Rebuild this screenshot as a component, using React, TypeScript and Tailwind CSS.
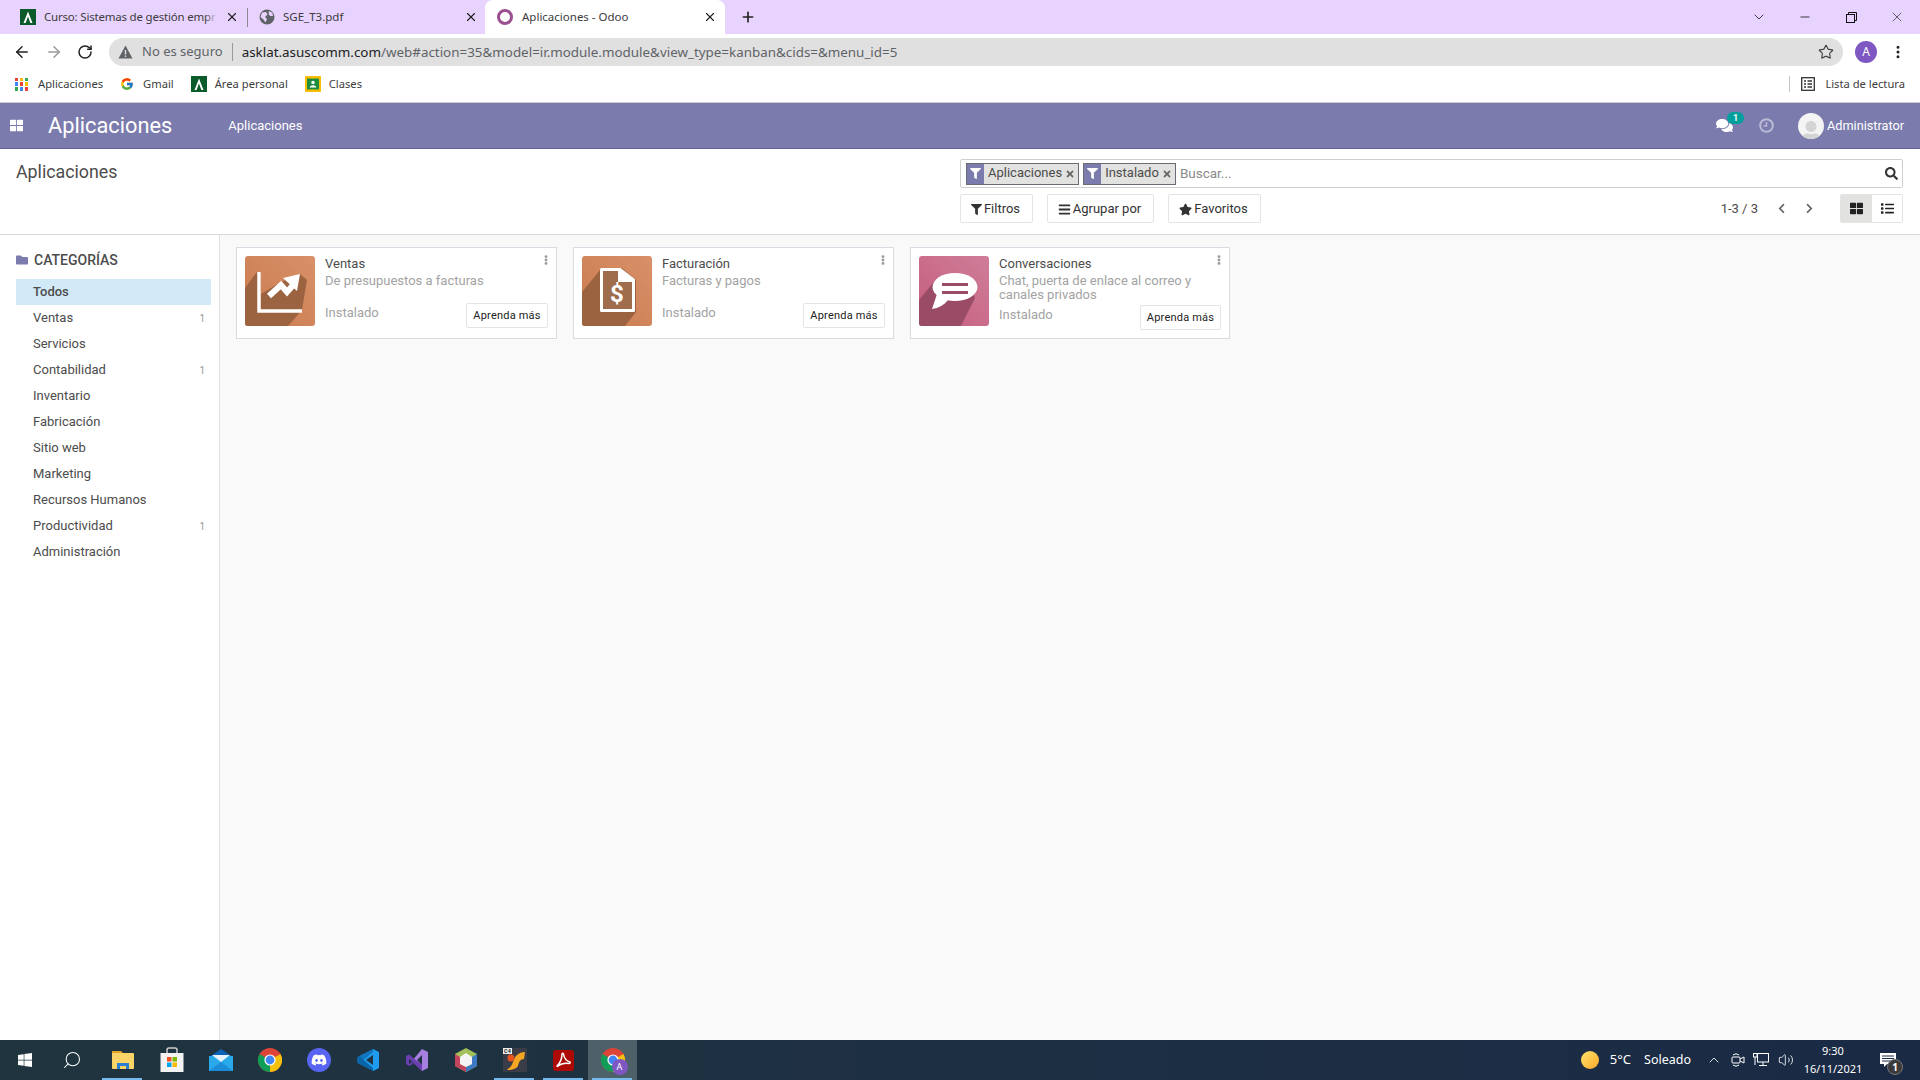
import React from 'react'
import { ArrowLeft, ArrowRight, RotateCw, X, Plus, ChevronDown, Minus, Star, ChevronUp, Volume2, EllipsisVertical, Search } from 'lucide-react'
import { FaFilter, FaBars, FaStar, FaThLarge, FaList, FaTimes, FaFolder, FaComments, FaChevronLeft, FaChevronRight, FaEllipsisV, FaSearch, FaWindows, FaDiscord, FaUser } from 'react-icons/fa'
import { FcGoogle } from 'react-icons/fc'

function AulaLogo({ size = 16 }: { size?: number }) {
  return (
    <svg width={size} height={size} viewBox="0 0 16 16" className="shrink-0">
      <rect width="16" height="16" fill="#0b5a2a" />
      <path d="M8 2.5 L12.5 14 H10.4 L8 7.5 L5.6 14 H3.5 Z" fill="#fff" />
    </svg>
  )
}

function ChromeIcon({ size = 24 }: { size?: number }) {
  return (
    <svg width={size} height={size} viewBox="0 0 24 24" className="shrink-0">
      <circle cx="12" cy="12" r="12" fill="#db4437" />
      <path d="M12 12 L1.6 6 A12 12 0 0 0 12 24 Z" fill="#0f9d58" />
      <path d="M12 12 L12 24 A12 12 0 0 0 22.4 6 Z" fill="#f4c20d" />
      <circle cx="12" cy="12" r="5.6" fill="#fff" />
      <circle cx="12" cy="12" r="4.4" fill="#4285f4" />
    </svg>
  )
}

function AppsGrid() {
  const colors = ['#ea4335', '#fbbc05', '#34a853', '#4285f4', '#ea4335', '#fbbc05', '#34a853', '#4285f4', '#ea4335']
  return (
    <div className="grid grid-cols-3 gap-[1.5px] w-[13px] h-[13px] shrink-0">
      {colors.map((c, i) => (
        <span key={i} style={{ backgroundColor: c }} />
      ))}
    </div>
  )
}

function Tabs() {
  return (
    <div className="h-[34px] bg-[#e8d3ff] flex pl-2 text-[11.5px] text-[#3c3c3c] shrink-0" style={{ fontFamily: '"Noto Sans", sans-serif' }}>
      <div className="w-[240px] flex items-center pl-3 pr-[9px] gap-2 relative">
        <AulaLogo />
        <span className="relative flex-1 min-w-0 whitespace-nowrap tracking-[-0.2px]">
          Curso: Sistemas de gestión empr
          <span className="absolute right-0 top-0 bottom-0 w-[12px] bg-gradient-to-r from-transparent to-[#e8d3ff]" />
        </span>
        <X size={14} strokeWidth={2} color="#222" className="shrink-0" />
        <span className="absolute right-0 top-[8px] h-[19px] w-px bg-[#8d8796]" />
      </div>
      <div className="w-[237px] flex items-center pl-[11px] pr-[7px] gap-2">
        <svg width="16" height="16" viewBox="0 0 16 16" className="shrink-0">
          <circle cx="8" cy="8" r="7.5" fill="#5f6368" />
          <path d="M3 3.5 L7 3 L8.5 5.5 L6 8 L8 10 L6.5 13.5 L4.5 10.5 L1.5 8 Z M10 2 L13.5 4 L14 7 L11 7 L9.5 4.5 Z" fill="#e8d3ff" />
        </svg>
        <span className="flex-1 whitespace-nowrap">SGE_T3.pdf</span>
        <X size={14} strokeWidth={2} color="#222" className="shrink-0" />
      </div>
      <div className="w-[240px] flex items-center pl-3 pr-2 gap-[9px] bg-white rounded-t-[8px]">
        <span className="w-[16px] h-[16px] rounded-full border-[3px] border-[#9b4f8f] shrink-0" />
        <span className="flex-1 whitespace-nowrap">Aplicaciones - Odoo</span>
        <X size={14} strokeWidth={2} color="#222" className="shrink-0" />
      </div>
      <div className="flex items-center ml-[15px]">
        <Plus size={16} strokeWidth={2.5} color="#222" />
      </div>
      <div className="ml-auto flex text-[#222]">
        <div className="w-[46px] flex items-center justify-center"><ChevronDown size={16} strokeWidth={1.25} /></div>
        <div className="w-[46px] flex items-center justify-center"><Minus size={14} strokeWidth={1.5} /></div>
        <div className="w-[46px] flex items-center justify-center">
          <svg width="11" height="11" viewBox="0 0 11 11" fill="none" stroke="#111" strokeWidth="1">
            <rect x="0.5" y="2.5" width="8" height="8" />
            <path d="M2.5 2.5 V0.5 H10.5 V8.5 H8.5" />
          </svg>
        </div>
        <div className="w-[46px] flex items-center justify-center"><X size={16} strokeWidth={1} /></div>
      </div>
    </div>
  )
}

function Toolbar() {
  return (
    <div className="h-[35px] bg-white flex items-center shrink-0" style={{ fontFamily: '"Noto Sans", sans-serif' }}>
      <div className="w-[109px] flex items-center pl-[13px] gap-[14px]">
        <ArrowLeft size={18} strokeWidth={2} color="#222" />
        <ArrowRight size={18} strokeWidth={2} color="#9a9a9a" />
        <RotateCw size={16} strokeWidth={2.25} color="#222" />
      </div>
      <div className="w-[1734px] h-[28px] rounded-full bg-[#e0e0e0] flex items-center pl-[9px] text-[13px]">
        <svg width="15" height="14" viewBox="0 0 15 14" className="shrink-0">
          <path d="M7.5 0.5 L14.5 13.5 H0.5 Z" fill="#5f6368" />
          <rect x="6.8" y="5" width="1.4" height="4.5" fill="#e0e0e0" />
          <rect x="6.8" y="10.5" width="1.4" height="1.4" fill="#e0e0e0" />
        </svg>
        <span className="ml-[9px] pt-[1px] text-[#5f6368] whitespace-nowrap">No es seguro</span>
        <span className="ml-[9px] w-px h-[18px] bg-[#9a9a9a]" />
        <span className="ml-[9px] pt-[1px] text-[13.4px] text-[#202124] whitespace-nowrap">asklat.asuscomm.com<span className="text-[#5f6368]">/web#action=35&amp;model=ir.module.module&amp;view_type=kanban&amp;cids=&amp;menu_id=5</span></span>
        <Star size={16} strokeWidth={1.75} color="#444" className="ml-auto mr-[9px]" />
      </div>
      <span className="ml-[12px] w-[22px] h-[22px] rounded-full bg-[#7e57c2] text-white text-[12px] flex items-center justify-center">A</span>
      <EllipsisVertical size={16} strokeWidth={2.5} color="#222" className="ml-[13px]" />
    </div>
  )
}

function Bookmarks() {
  return (
    <div className="h-[34px] bg-white border-b border-[#cdcdcd] flex items-center pl-[15px] pr-[15px] pb-[3px] text-[11.2px] text-[#3c3c3c] shrink-0" style={{ fontFamily: '"Noto Sans", sans-serif' }}>
      <AppsGrid />
      <span className="ml-[10px]">Aplicaciones</span>
      <FcGoogle size={14} className="ml-[17px]" />
      <span className="ml-[9px]">Gmail</span>
      <span className="ml-[17px]"><AulaLogo /></span>
      <span className="ml-[8px]">Área personal</span>
      <svg width="16" height="16" viewBox="0 0 16 16" className="ml-[17px] shrink-0">
        <rect width="16" height="16" rx="1" fill="#fbbc05" />
        <rect x="2" y="2.5" width="12" height="11" fill="#1e8e3e" />
        <circle cx="8" cy="6.5" r="1.7" fill="#fff" />
        <path d="M4.8 11.5 C5 8.6 11 8.6 11.2 11.5 Z" fill="#fff" />
      </svg>
      <span className="ml-[8px]">Clases</span>
      <span className="ml-auto w-px h-[16px] bg-[#c4c4c4]" />
      <svg width="14" height="14" viewBox="0 0 14 14" fill="none" stroke="#333" strokeWidth="1.3" className="ml-[11px]">
        <rect x="0.7" y="0.7" width="12.6" height="12.6" />
        <path d="M3 4 H5 M6.5 4 H11 M3 7 H5 M6.5 7 H11 M3 10 H5 M6.5 10 H11" />
      </svg>
      <span className="ml-[10px]">Lista de lectura</span>
    </div>
  )
}

function Navbar() {
  return (
    <div className="h-[46px] bg-[#7c7bad] border-b border-[#5f5e97] flex items-center text-white shrink-0">
      <FaThLarge size={13} className="ml-[10px]" />
      <span className="ml-[25px] text-[21.8px] leading-none">Aplicaciones</span>
      <span className="ml-[56px] text-[13px]">Aplicaciones</span>
      <div className="ml-auto flex items-center pr-4">
        <span className="relative">
          <FaComments size={17} />
          <span className="absolute -top-[5px] left-[11px] w-[17px] h-[12px] rounded-full bg-[#00a09d] text-[9px] leading-[12px] text-center font-bold">1</span>
        </span>
        <svg width="15" height="15" viewBox="0 0 15 15" fill="none" stroke="#bcbbd6" strokeWidth="2" className="ml-[26px]">
          <circle cx="7.5" cy="7.5" r="6.3" />
          <path d="M7.5 4 V8 H4.5" strokeWidth="1.5" />
        </svg>
        <span className="ml-[24px] w-[26px] h-[26px] rounded-full bg-[#f4f4f4] overflow-hidden flex items-end justify-center">
          <FaUser size={22} color="#d4d4d4" className="-mb-[4px]" />
        </span>
        <span className="ml-[3px] text-[12.7px]">Administrator</span>
      </div>
    </div>
  )
}

function Facet({ label }: { label: string }) {
  return (
    <div className="h-[22px] border border-[#6b6b73] bg-[#e2e2e0] flex items-center text-[13px] text-[#4c4c4c]">
      <span className="w-[17px] h-full bg-[#7c7bad] flex items-center justify-center">
        <FaFilter size={11} color="#fff" />
      </span>
      <span className="ml-[4px] -mt-[1px]">{label}</span>
      <FaTimes size={10} color="#666" className="ml-[3px] mr-[3px]" />
    </div>
  )
}

function ToolButton({ icon, label, className }: { icon: React.ReactNode; label: string; className: string }) {
  return (
    <div className={`h-[29px] border border-[#e4e4e4] rounded-[2px] bg-white flex items-center justify-center gap-[2px] pt-[1px] pr-[2px] text-[13px] text-[#333] ${className}`}>
      {icon}
      {label}
    </div>
  )
}

function ControlPanel() {
  return (
    <div className="h-[86px] bg-white border-b border-[#d9d9d9] flex shrink-0">
      <div className="w-[960px] pl-4 pt-[12px] text-[17.8px] leading-[22px] text-[#4c4c4c]">Aplicaciones</div>
      <div className="w-[943px] pt-[10px]">
        <div className="h-[29px] border border-[#cfcfcf] rounded-[2px] flex items-center pl-[5px] pr-[4px]">
          <Facet label="Aplicaciones" />
          <span className="w-[4px]" />
          <Facet label="Instalado" />
          <span className="ml-[4px] text-[13.5px] text-[#8a8a8a]">Buscar...</span>
          <FaSearch size={13} color="#333" className="ml-auto" />
        </div>
        <div className="flex items-center mt-[6px]">
          <ToolButton className="w-[73px]" icon={<FaFilter size={11} />} label="Filtros" />
          <ToolButton className="w-[107px] ml-[14px]" icon={<FaBars size={13} />} label="Agrupar por" />
          <ToolButton className="w-[93px] ml-[14px]" icon={<FaStar size={13} />} label="Favoritos" />
          <span className="ml-auto text-[13px] text-[#4c4c4c]">1-3 / 3</span>
          <FaChevronLeft size={11} color="#666" className="ml-[18px]" />
          <FaChevronRight size={11} color="#666" className="ml-[17px]" />
          <div className="ml-[25px] w-[63px] h-[29px] border border-[#e4e4e4] rounded-[2px] flex">
            <span className="w-[31px] bg-[#e2e2e0] flex items-center justify-center"><FaThLarge size={13} color="#222" /></span>
            <span className="flex-1 flex items-center justify-center"><FaList size={13} color="#222" /></span>
          </div>
        </div>
      </div>
    </div>
  )
}

const categories = [
  { name: 'Todos', active: true },
  { name: 'Ventas', count: 1 },
  { name: 'Servicios' },
  { name: 'Contabilidad', count: 1 },
  { name: 'Inventario' },
  { name: 'Fabricación' },
  { name: 'Sitio web' },
  { name: 'Marketing' },
  { name: 'Recursos Humanos' },
  { name: 'Productividad', count: 1 },
  { name: 'Administración' },
]

function Sidebar() {
  return (
    <div className="w-[220px] bg-white border-r border-[#dedede] pl-4 pt-[16px] shrink-0">
      <div className="flex items-center h-[18px] text-[14px] font-medium text-[#4c4c4c]">
        <FaFolder size={12} color="#7c7bad" />
        <span className="ml-[6px]">CATEGORÍAS</span>
      </div>
      <div className="mt-[10px] w-[195px]">
        {categories.map((c) => (
          <div key={c.name} className={`h-[26px] flex items-center pl-[17px] pr-[6px] text-[13px] text-[#4c4c4c] ${c.active ? 'bg-[#d2e9f8] font-medium' : ''}`}>
            <span>{c.name}</span>
            {c.count && <span className="ml-auto text-[10px] text-[#999]">{c.count}</span>}
          </div>
        ))}
      </div>
    </div>
  )
}

function IconBg({ id, from, to, children }: { id: string; from: string; to: string; children: React.ReactNode }) {
  return (
    <svg width="70" height="70" viewBox="0 0 70 70" className="shrink-0">
      <defs>
        <linearGradient id={id} x1="0" y1="1" x2="1" y2="0">
          <stop offset="0" stopColor={from} />
          <stop offset="1" stopColor={to} />
        </linearGradient>
        <clipPath id={`${id}-c`}>
          <rect width="70" height="70" rx="3" />
        </clipPath>
      </defs>
      <g clipPath={`url(#${id}-c)`}>
        <rect width="70" height="70" fill={`url(#${id})`} />
        {children}
      </g>
    </svg>
  )
}

function VentasIcon() {
  return (
    <IconBg id="ventas" from="#c97a4c" to="#d9916a">
      <path d="M12 16 L0 32 V70 H43 L57 54 L62 24 L55 18 L36 26 L16 38 V16 Z" fill="#9c6340" />
      <path d="M14 16 V55 H57" fill="none" stroke="#fff" strokeWidth="3.5" />
      <path d="M24 40 L36 29 L42 36 L50 27" fill="none" stroke="#fff" strokeWidth="6" />
      <path d="M38 22 L55 18 L52 35 Z" fill="#fff" />
    </IconBg>
  )
}

function FacturaIcon() {
  return (
    <IconBg id="factura" from="#c97a4c" to="#d9916a">
      <path d="M18 14 L0 36 V70 H43 L54 56 V24 L40 12 Z" fill="#9c6340" />
      <path d="M19.5 13.5 H38 L51.5 24 V54.5 H19.5 Z" fill="#9f6c4c" stroke="#fff" strokeWidth="3" strokeLinejoin="round" />
      <path d="M37 13.5 V25 H51.5" fill="#fff" stroke="#fff" strokeWidth="2" />
      <text x="35" y="46" textAnchor="middle" fontFamily="Roboto, sans-serif" fontWeight="700" fontSize="24" fill="#fff">$</text>
    </IconBg>
  )
}

function ChatIcon() {
  return (
    <IconBg id="chat" from="#c55d7e" to="#cf7d98">
      <path d="M18 22 L0 44 V70 H42 L56 42 L50 28 Z" fill="#9a4c67" />
      <ellipse cx="36" cy="31" rx="22.5" ry="14" fill="#fff" />
      <path d="M18 38 L13 53 C20 52 25 49 29 44 Z" fill="#fff" />
      <rect x="23" y="27" width="26" height="3" fill="#9a4c67" />
      <rect x="23" y="35" width="26" height="3" fill="#9a4c67" />
    </IconBg>
  )
}

const apps = [
  { name: 'Ventas', summary: 'De presupuestos a facturas', icon: <VentasIcon />, footer: 'mt-[15px]', width: 'w-[321px]', btn: 'w-[82px]' },
  { name: 'Facturación', summary: 'Facturas y pagos', icon: <FacturaIcon />, footer: 'mt-[15px]', width: 'w-[321px]', btn: 'w-[82px]' },
  { name: 'Conversaciones', summary: 'Chat, puerta de enlace al correo y canales privados', icon: <ChatIcon />, footer: 'mt-[3px]', width: 'w-[320px]', btn: 'w-[81px]' },
]

function AppCard({ app }: { app: (typeof apps)[number] }) {
  return (
    <div className={`relative ${app.width} h-[92px] bg-white border border-[#d9dbe3] flex pl-2 pt-2 pr-2`}>
      {app.icon}
      <div className="ml-[10px] flex-1 min-w-0">
        <div className="text-[13px] leading-[14px] text-[#4c4c4c] mt-[1px]">{app.name}</div>
        <div className="text-[13px] leading-[14px] text-[#a3a3a3] mt-[3px] pr-[20px]">{app.summary}</div>
        <div className={`flex items-center justify-between ${app.footer}`}>
          <span className="text-[13px] text-[#a3a3a3] -mt-[6px]">Instalado</span>
          <span className={`${app.btn} h-[25px] border border-[#e4e4e4] rounded-[2px] flex items-center justify-center pt-[1px] text-[11px] text-[#222] tracking-[0.2px]`}>Aprenda más</span>
        </div>
      </div>
      <FaEllipsisV size={10} color="#9a9a9a" className="absolute right-[5px] top-[7px]" />
    </div>
  )
}

function TaskIcon({ children, active, open }: { children: React.ReactNode; active?: boolean; open?: boolean }) {
  return (
    <div className={`relative w-[49px] h-[40px] flex items-center justify-center ${active ? 'bg-[#4e6068]' : ''}`}>
      {children}
      {open && <span className="absolute left-[4px] right-[5px] bottom-0 h-[2px] bg-[#76b9ed]" />}
    </div>
  )
}

function Taskbar() {
  return (
    <div className="h-[40px] flex items-center bg-gradient-to-r from-[#20343f] to-[#1a2a45] text-white shrink-0" style={{ fontFamily: '"Noto Sans", sans-serif' }}>
      <TaskIcon><FaWindows size={16} /></TaskIcon>
      <TaskIcon><Search size={20} strokeWidth={1.25} className="-scale-x-100 -ml-[3px]" /></TaskIcon>
      <TaskIcon open>
        <svg width="24" height="24" viewBox="0 0 24 24">
          <path d="M1 3 H10 L12 5 V12 H1 Z" fill="#e0a526" />
          <rect x="1" y="5" width="22" height="16" rx="1" fill="#fbd467" />
          <path d="M6 21 V15 H18 V21 H15 V18 H9 V21 Z" fill="#2b7fd0" />
        </svg>
      </TaskIcon>
      <TaskIcon>
        <svg width="24" height="26" viewBox="0 0 24 26">
          <path d="M7 8 V3 Q7 1 9 1 H15 Q17 1 17 3 V8" fill="none" stroke="#ccc" strokeWidth="1.5" />
          <rect x="0.5" y="6" width="23" height="19" fill="#f3f3f3" />
          <rect x="7" y="10" width="4.5" height="4.5" fill="#f25022" />
          <rect x="12.5" y="10" width="4.5" height="4.5" fill="#7fba00" />
          <rect x="7" y="15.5" width="4.5" height="4.5" fill="#00a4ef" />
          <rect x="12.5" y="15.5" width="4.5" height="4.5" fill="#ffb900" />
        </svg>
      </TaskIcon>
      <TaskIcon>
        <svg width="24" height="24" viewBox="0 0 24 24">
          <path d="M12 1 L24 9 V23 H0 V9 Z" fill="#0b62b5" />
          <path d="M0 8 H24 V23 H0 Z" fill="#29a8ea" />
          <path d="M3 7 H21 L12 14 Z" fill="#e6f3fb" />
          <path d="M0 23 L12 14 L24 23 Z" fill="#1b8cd8" />
        </svg>
      </TaskIcon>
      <TaskIcon><ChromeIcon /></TaskIcon>
      <TaskIcon>
        <span className="w-[24px] h-[24px] rounded-full bg-[#5865f2] flex items-center justify-center"><FaDiscord size={16} color="#fff" /></span>
      </TaskIcon>
      <TaskIcon>
        <svg width="24" height="24" viewBox="0 0 24 24">
          <path d="M17 1 L23 4 V20 L17 23 L6 13 L17 1 Z M17 7 L10 12 L17 17 Z" fill="#1f9cf0" fillRule="evenodd" />
          <path d="M3 8 L1 10 V14 L3 16 L17 4 V1 Z" fill="#0f76bf" />
          <path d="M3 8 L1 10 V14 L3 16 L17 23 V20 Z" fill="#0a65a8" />
        </svg>
      </TaskIcon>
      <TaskIcon>
        <svg width="24" height="24" viewBox="0 0 24 24">
          <path d="M17 1 L23 4 V20 L17 23 L7 13 L17 1 Z M17 7 L12 12 L17 17 Z" fill="#a77fe0" fillRule="evenodd" />
          <path d="M1 8 L4 6.5 L17 17 V23 L4 11 V16 L7 14 L8 16 L4 18 L1 16 Z" fill="#6b3fb0" />
        </svg>
      </TaskIcon>
      <TaskIcon>
        <svg width="22" height="24" viewBox="0 0 22 24">
          <path d="M11 0 L22 6 V18 L11 24 L0 18 V6 Z" fill="#a3c05a" />
          <path d="M0 6 L5 9 V16 L11 19 V24 L0 18 Z" fill="#c2435c" />
          <path d="M22 6 L17 9 V16 L11 19 V24 L22 18 Z" fill="#3d79c4" />
          <path d="M11 5 L17 9 V16 L11 19 L5 16 V9 Z" fill="#f4f4f4" />
        </svg>
      </TaskIcon>
      <TaskIcon open>
        <svg width="24" height="24" viewBox="0 0 24 24">
          <rect width="24" height="24" fill="#3a3d47" />
          <path d="M4 21 C10 20 10 10 14 7 C16 5 19 4 22 4 L21 11 C17 11 16 14 15 18 C14 20 10 22 5 22 Z" fill="#f5a623" />
          <circle cx="8" cy="10" r="3.5" fill="#e8541e" />
          <rect x="0" y="0" width="9" height="6" fill="#eee" />
          <text x="4.5" y="5" textAnchor="middle" fontSize="5.5" fontWeight="700" fill="#222" fontFamily="Roboto, sans-serif">C4</text>
        </svg>
      </TaskIcon>
      <TaskIcon open>
        <svg width="21" height="21" viewBox="0 0 21 21">
          <rect width="21" height="21" rx="3" fill="#ae0a05" />
          <path d="M4 16 C7 13 9 8 9 4 C9 3 10 3 10.5 4 C11 7 13 11 17 12 C17.6 13 17 13.5 16 13.5 C12 13 8 13.5 5 16 C4.5 16.6 4 16.5 4 16 Z" fill="none" stroke="#fff" strokeWidth="1.5" />
        </svg>
      </TaskIcon>
      <TaskIcon active open>
        <span className="relative">
          <ChromeIcon />
          <span className="absolute -right-[3px] -bottom-[3px] w-[16px] h-[16px] rounded-full bg-[#7e57c2] text-[9px] leading-[16px] text-center">A</span>
        </span>
      </TaskIcon>

      <div className="ml-auto flex items-center pr-[9px]">
        <span className="w-[18px] h-[18px] rounded-full bg-gradient-to-br from-[#ffe36a] to-[#f9a825]" />
        <span className="ml-[11px] text-[13px]">5°C</span>
        <span className="ml-[13px] text-[12.5px]">Soleado</span>
        <ChevronUp size={16} strokeWidth={1.25} className="ml-[15px]" />
        <svg width="14" height="16" viewBox="0 0 14 16" fill="none" stroke="#fff" strokeWidth="1" className="ml-[9px]">
          <rect x="1" y="5" width="8" height="6" rx="1" />
          <path d="M9 7 L13 5 V11 L9 9 M2 3 Q5 0.5 8 3 M2 13 Q5 15.5 8 13" />
        </svg>
        <svg width="16" height="14" viewBox="0 0 16 14" fill="none" stroke="#fff" strokeWidth="1" className="ml-[8px]">
          <rect x="4.5" y="0.5" width="11" height="8.5" />
          <rect x="0.5" y="0.5" width="3.5" height="3.5" />
          <path d="M2 4 V12 M10 9 V12.5 M6 12.5 H14" />
        </svg>
        <Volume2 size={16} strokeWidth={1.25} className="ml-[9px]" />
        <div className="w-[64px] ml-[7px] text-center text-[11px] leading-[18px]">
          <div>9:30</div>
          <div>16/11/2021</div>
        </div>
        <span className="relative w-[46px] flex justify-center">
          <svg width="16" height="14" viewBox="0 0 16 14">
            <path d="M0 0 H16 V11 H7 L4 14 V11 H0 Z" fill="#fff" />
            <path d="M2 3 H14 M2 5.5 H14 M2 8 H14" stroke="#1a2a45" strokeWidth="1" />
          </svg>
          <span className="absolute left-[22px] top-[6px] w-[16px] h-[16px] rounded-full bg-[#3a3a3a] border border-[#777] text-[10px] leading-[14px] text-center font-bold">1</span>
        </span>
      </div>
    </div>
  )
}

export default function App() {
  return (
    <div className="w-[1920px] h-[1080px] flex flex-col overflow-hidden" style={{ fontFamily: 'Roboto, sans-serif' }}>
      <Tabs />
      <Toolbar />
      <Bookmarks />
      <Navbar />
      <ControlPanel />
      <div className="flex-1 flex min-h-0">
        <Sidebar />
        <div className="flex-1 bg-[#f9f9f9] pt-3 pl-4 flex items-start gap-4">
          {apps.map((a) => (
            <AppCard key={a.name} app={a} />
          ))}
        </div>
      </div>
      <Taskbar />
    </div>
  )
}
